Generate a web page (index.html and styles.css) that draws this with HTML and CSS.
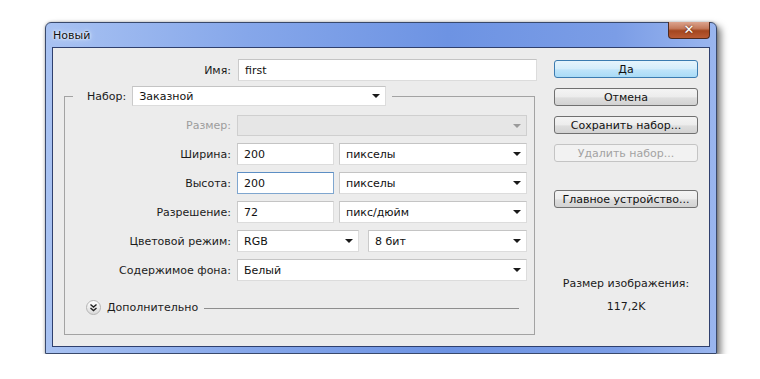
FILE: index.html
```html
<!DOCTYPE html>
<html lang="ru">
<head>
    <meta charset="UTF-8">
    <title>Новый</title>
    <link rel="stylesheet" href="styles.css">
</head>
<body>
    <div class="window">
        <div class="titlebar">
            <span class="title">Новый</span>
            <span class="close">✕</span>
        </div>
        <div class="client">
            <div class="main">
                <div class="name-row">
                    <label class="name-label">Имя:</label>
                    <div class="field name-field">first</div>
                </div>

                <fieldset class="preset">
                    <legend>
                        <span class="legend-inner">
                            <label>Набор:</label>
                            <span class="select preset-select">Заказной<i class="arrow"></i></span>
                        </span>
                    </legend>

                    <div class="rows">
                        <div class="row">
                            <label class="row-label muted">Размер:</label>
                            <span class="select full disabled"><i class="arrow muted-arrow"></i></span>
                        </div>
                        <div class="row">
                            <label class="row-label">Ширина:</label>
                            <span class="field num">200</span>
                            <span class="select unit">пикселы<i class="arrow"></i></span>
                        </div>
                        <div class="row">
                            <label class="row-label">Высота:</label>
                            <span class="field num focused">200</span>
                            <span class="select unit">пикселы<i class="arrow"></i></span>
                        </div>
                        <div class="row">
                            <label class="row-label">Разрешение:</label>
                            <span class="field num">72</span>
                            <span class="select unit">пикс/дюйм<i class="arrow"></i></span>
                        </div>
                        <div class="row">
                            <label class="row-label">Цветовой режим:</label>
                            <span class="select mode">RGB<i class="arrow"></i></span>
                            <span class="select depth">8 бит<i class="arrow"></i></span>
                        </div>
                        <div class="row">
                            <label class="row-label">Содержимое фона:</label>
                            <span class="select full">Белый<i class="arrow"></i></span>
                        </div>
                    </div>

                    <div class="advanced">
                        <span class="toggle">
                            <svg width="9" height="9" viewBox="0 0 9 9"><path d="M1.5 1.5 L4.5 4 L7.5 1.5 M1.5 5 L4.5 7.5 L7.5 5" fill="none" stroke="#222" stroke-width="1.4"/></svg>
                        </span>
                        <span class="advanced-text">Дополнительно</span>
                        <span class="advanced-line"></span>
                    </div>
                </fieldset>
            </div>

            <div class="side">
                <button class="btn default">Да</button>
                <button class="btn">Отмена</button>
                <button class="btn">Сохранить набор...</button>
                <button class="btn" disabled>Удалить набор...</button>
                <button class="btn device">Главное устройство...</button>
                <div class="size-caption">Размер изображения:</div>
                <div class="size-value">117,2K</div>
            </div>
        </div>
    </div>
</body>
</html>
```

FILE: styles.css
```css
body {
    margin: 0;
    background: #fff;
    font-family: "DejaVu Sans", Tahoma, sans-serif;
    font-size: 11px;
    color: #1b1b1b;
}
.window {
    margin: 22px 0 0 45px;
    width: 672px;
    box-sizing: border-box;
    border: 1px solid #39496b;
    border-radius: 6px 6px 0 0;
    padding: 0 6px 6px;
    background: linear-gradient(to right, #a8c2f2 0%, #86a7ea 30%, #6d93e3 60%, #7b9de6 85%, #9ab6ef 100%);
    box-shadow: 4px 4px 7px rgba(0, 0, 0, 0.5), 0 0 3px rgba(0, 0, 0, 0.3);
}
.titlebar {
    height: 24px;
    display: flex;
    align-items: flex-start;
}
.title {
    margin: 6px 0 0 1px;
    font-size: 11px;
    color: #111;
    text-shadow: 0 0 6px #e6eefc, 0 0 3px #e6eefc, 0 0 2px #e6eefc;
}
.close {
    margin-left: auto;
    margin-top: -1px;
    width: 42px;
    height: 17px;
    box-sizing: border-box;
    border: 1px solid #4d2a20;
    border-top: none;
    border-radius: 0 0 4px 4px;
    background: linear-gradient(#dca48e 0%, #c47a5c 40%, #a4461f 55%, #b95a34 100%);
    color: #fff;
    font-size: 13px;
    font-weight: bold;
    text-align: center;
    line-height: 16px;
    text-shadow: 0 0 2px #4a1808;
}
.client {
    display: flex;
    gap: 17px;
    border: 1px solid #2f406e;
    background: #ececec;
    padding: 11px 11px 11px 0;
}
.main {
    width: 484px;
}
.name-row {
    display: flex;
    align-items: center;
    gap: 7px;
}
.name-label {
    width: 178px;
    text-align: right;
}
.field, .select {
    height: 22px;
    box-sizing: border-box;
    background: #fff;
    border: 1px solid #dcdcdc;
    border-top-color: #c4c4c4;
    border-left-color: #cacaca;
    display: flex;
    align-items: center;
    padding-left: 6px;
    color: #111;
    font-size: 11px;
}
.name-field {
    width: 299px;
}
.preset {
    margin: 5px 0 0 11px;
    width: 471px;
    box-sizing: border-box;
    padding: 0 0 19px;
    border: 1px solid #a3a3a3;
}
.preset legend {
    margin-left: 8px;
    padding: 0 6px 0 14px;
}
.legend-inner {
    display: flex;
    align-items: center;
    gap: 6px;
}
.preset-select {
    width: 254px;
    height: 20px;
}
.select {
    position: relative;
}
.arrow {
    position: absolute;
    right: 5px;
    top: 50%;
    margin-top: -2px;
    border-left: 4px solid transparent;
    border-right: 4px solid transparent;
    border-top: 4px solid #1a1a1a;
}
.muted-arrow {
    border-top-color: #9a9a9a;
}
.rows {
    padding-top: 9px;
    display: flex;
    flex-direction: column;
    gap: 7px;
}
.row {
    display: flex;
    align-items: center;
}
.row-label {
    width: 166px;
    margin-right: 6px;
    text-align: right;
}
.muted {
    color: #9c9c9c;
}
.select.disabled {
    background: #e6e6e6;
    border-color: #cfcfcf;
    height: 21px;
}
.full {
    width: 290px;
}
.num {
    width: 97px;
    margin-right: 5px;
}
.focused {
    border-color: #7fa6cf;
    border-top-color: #5c8ec4;
}
.unit {
    width: 188px;
}
.mode {
    width: 122px;
    margin-right: 9px;
}
.depth {
    width: 159px;
}
.advanced {
    margin-top: 19px;
    padding: 0 15px 0 21px;
    display: flex;
    align-items: center;
    height: 15px;
}
.toggle {
    width: 15px;
    height: 15px;
    box-sizing: border-box;
    border-radius: 50%;
    border: 1px solid #b4b4b4;
    background: linear-gradient(#ffffff, #dadada);
    display: flex;
    align-items: center;
    justify-content: center;
    margin-right: 6px;
}
.advanced-text {
    margin-right: 6px;
}
.advanced-line {
    flex: 1;
    border-top: 1px solid #8e8e8e;
    margin-top: 1px;
}
.side {
    width: 144px;
    padding-top: 1px;
    display: flex;
    flex-direction: column;
    gap: 10px;
}
.btn {
    height: 18px;
    padding: 0;
    font-family: inherit;
    font-size: 11px;
    color: #111;
    border: 1px solid #707070;
    border-radius: 3px;
    background: linear-gradient(#f4f4f4 0%, #ececec 50%, #dedede 55%, #d2d2d2 100%);
    line-height: 15px;
}
.btn.default {
    border-color: #3b7bb0;
    background: linear-gradient(#e6f4fc 0%, #d4edfb 50%, #bfe4fa 55%, #a9dbf6 100%);
}
.btn:disabled {
    color: #a3a3a3;
    border-color: #c4c4c4;
    background: #f2f2f2;
}
.btn.device {
    margin-top: 18px;
}
.size-caption {
    margin-top: 59px;
    text-align: center;
    line-height: 14px;
}
.size-value {
    margin-top: -1px;
    text-align: center;
    line-height: 14px;
}
```
